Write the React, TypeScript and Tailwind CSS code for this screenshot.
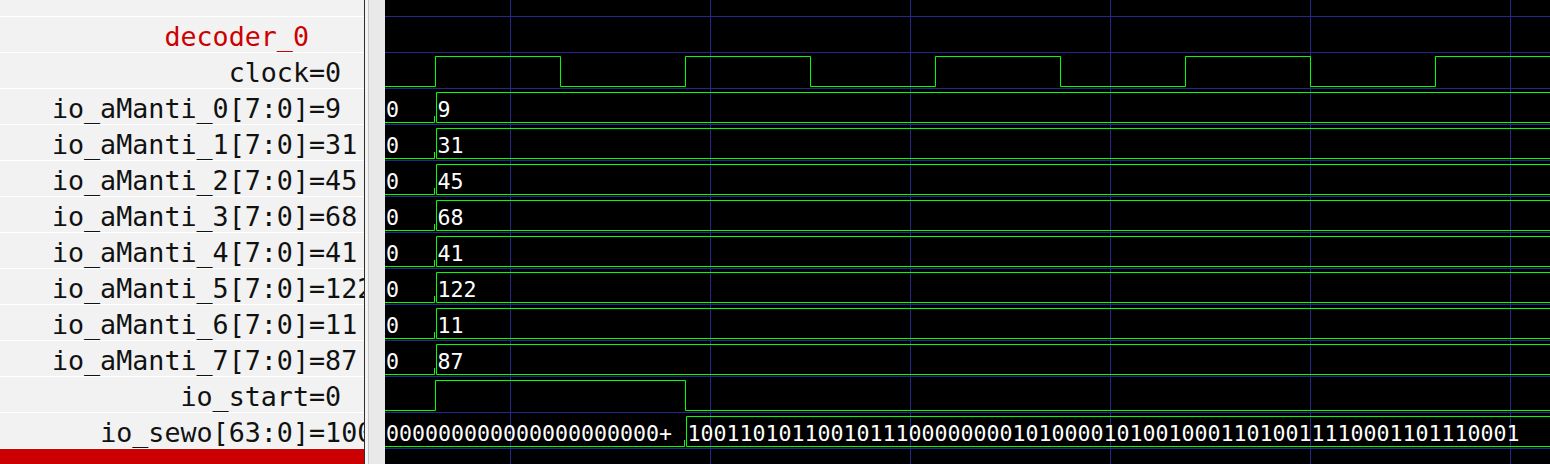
import React from "react";

const sewo =
  "1001101011001011100000000101000010100100011010011110001101110001";
const manti = [9, 31, 45, 68, 41, 122, 11, 87];

type Row = { name: string; value?: string; header?: boolean };

const rows: Row[] = [
  { name: "decoder_0", header: true },
  { name: "clock", value: "0" },
  ...manti.map((v, i) => ({ name: `io_aManti_${i}[7:0]`, value: String(v) })),
  { name: "io_start", value: "0" },
  { name: "io_sewo[63:0]", value: sewo },
];

const W = 1165;
const H = 464;
const top = (k: number) => 16 + 36 * k; // k = row index incl. decoder row

function NameRow({ row }: { row: Row }) {
  return (
    <div className="flex h-[36px] shrink-0 border-t border-white leading-[40px] whitespace-nowrap">
      <span
        className={`w-[309px] shrink-0 text-right ${row.header ? "text-[#cc0000]" : "text-[#111]"}`}
      >
        {row.name}
      </span>
      {row.value !== undefined && <span className="text-[#111]">={row.value}</span>}
    </div>
  );
}

function Waves() {
  const green = "#00ff00";
  const blue = "#27278c";

  // clock: row 1
  const ct = top(1);
  let clk = `M0 ${ct + 34.5}`;
  let high = false;
  for (let x = 50.5; x < W; x += 125) {
    const y = high ? ct + 34.5 : ct + 4.5;
    clk += ` H${x} V${y}`;
    high = !high;
  }
  clk += ` H${W}`;

  const st = top(10);
  const start = `M0 ${st + 34.5} H50.5 V${st + 4.5} H300.5 V${st + 34.5} H${W}`;

  const bus = (t: number, edge: number, key: string, a: string, b: string) => (
    <g key={key}>
      <path
        d={`M0 ${t + 34.5} H${edge - 1} M${edge - 1} ${t + 28} V${t + 34.5} M${edge + 1} ${t + 34.5} V${t + 4.5} H${W} M${edge + 1} ${t + 34.5} H${W}`}
        stroke={green}
        fill="none"
      />
      <text x={1} y={t + 29} fill="#fff">
        {a}
      </text>
      <text x={edge + 2} y={t + 29} fill="#fff">
        {b}
      </text>
    </g>
  );

  return (
    <svg
      width={W}
      height={H}
      className="block font-['DejaVu_Sans_Mono',monospace] text-[21.6px]"
    >
      <rect width={W} height={H} fill="#000" />
      {Array.from({ length: 13 }).map((_, k) => (
        <line key={"h" + k} x1={0} x2={W} y1={top(k) + 0.5} y2={top(k) + 0.5} stroke={blue} />
      ))}
      {[125, 325, 525, 725, 925, 1125].map((x) => (
        <line key={"v" + x} x1={x + 0.5} x2={x + 0.5} y1={0} y2={H} stroke={blue} />
      ))}
      <path d={clk} stroke={green} fill="none" />
      {manti.map((v, i) => bus(top(2 + i), 50.5, "m" + i, "0", String(v)))}
      <path d={start} stroke={green} fill="none" />
      {bus(top(11), 300.5, "sewo", "0".repeat(21) + "+", sewo)}
    </svg>
  );
}

export default function App() {
  return (
    <div className="flex h-[464px] w-[1550px] overflow-hidden bg-black">
      <div className="flex w-[364px] shrink-0 flex-col overflow-hidden bg-[#f2f2f2] font-['DejaVu_Sans_Mono',monospace] text-[26.7px]">
        <div className="h-[16px] shrink-0" />
        {rows.map((r) => (
          <NameRow key={r.name} row={r} />
        ))}
        <div className="h-[16px] shrink-0 border-t border-white bg-[#cc0000]" />
      </div>
      <div className="w-[1px] shrink-0 bg-[#2e2e2e]" />
      <div className="w-[3px] shrink-0 bg-[#f4f4f4]" />
      <div className="w-[1px] shrink-0 bg-[#c6c6c6]" />
      <div className="w-[16px] shrink-0 bg-[#e9e9e9]" />
      <Waves />
    </div>
  );
}
